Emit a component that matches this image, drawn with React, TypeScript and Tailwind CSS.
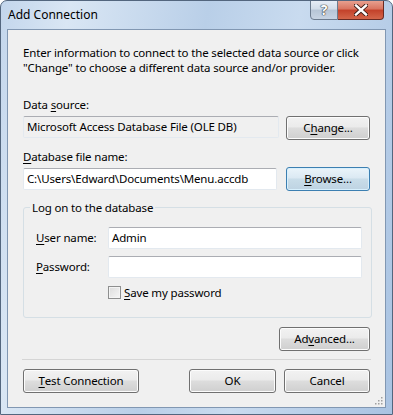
import React from "react";

const btn =
  "h-[24px] rounded-[3px] border border-[#707070] bg-[linear-gradient(#f2f2f2_0%,#ebebeb_45%,#dddddd_50%,#cfcfcf_100%)] shadow-[inset_0_0_0_1px_#fcfcfc] text-[11.5px] text-black flex items-center justify-center";

const field =
  "h-[22px] rounded-[2px] border border-[#e3e9ef] border-t-[#abadb3] flex items-center px-[3px] text-[11.5px]";

function U({ children }: { children: React.ReactNode }) {
  return <span className="underline underline-offset-[2px]">{children}</span>;
}

export default function App() {
  return (
    <div
      className="w-[393px] h-[415px] flex flex-col rounded-t-[7px] border border-[#53667e] bg-[linear-gradient(100deg,#c3d6ec_0%,#d9e6f4_15%,#b9cfe8_45%,#c9dbef_65%,#a9c3e2_100%)] overflow-hidden"
      style={{ fontFamily: '"Noto Sans", "Open Sans", sans-serif' }}
    >
      {/* title bar */}
      <div className="h-[28px] flex items-start justify-between shrink-0">
        <div className="pl-[7px] pt-[6px] text-[12px] leading-[16px] text-black">Add Connection</div>
        <div className="flex mr-[8px] -mt-px">
          <div className="w-[28px] h-[20px] rounded-bl-[4px] border border-[#6b7b8e] bg-[linear-gradient(#e6edf6_0%,#d2dde9_45%,#b6c5d6_50%,#c7d4e3_100%)] flex items-center justify-center">
            <span className="text-[14px] font-bold text-white leading-none [text-shadow:0_0_1px_#333,0_0_1px_#333,0_0_1px_#333]">?</span>
          </div>
          <div className="w-[46px] h-[20px] rounded-br-[4px] border border-l-0 border-[#6a2a22] bg-[linear-gradient(#e7a08f_0%,#d8735f_45%,#c3412a_50%,#d4664a_100%)] flex items-center justify-center">
            <svg width="14" height="12" viewBox="0 0 14 12">
              <path d="M2 1.5 L12 10.5 M12 1.5 L2 10.5" stroke="#3a1a14" strokeWidth="4.2" strokeLinecap="square" />
              <path d="M2 1.5 L12 10.5 M12 1.5 L2 10.5" stroke="#ffffff" strokeWidth="2.4" strokeLinecap="square" />
            </svg>
          </div>
        </div>
      </div>

      {/* client area */}
      <div className="mx-[6px] h-[379px] border border-[#8197b2] bg-[#f0f0f0] flex flex-col px-[15px] text-[11.5px] tracking-[-0.15px] text-black relative">
        <div className="mt-[15px] leading-[15px] whitespace-nowrap">
          Enter information to connect to the selected data source or click
          <br />
          "Change" to choose a different data source and/or provider.
        </div>

        <div className="mt-[22px] leading-[15px]">
          Data <U>s</U>ource:
        </div>
        <div className="mt-[4px] flex gap-[7px] items-start">
          <div className={field + " flex-1 bg-[#f0f0f0] border-[#dadada] border-t-[#abadb3]"}>
            Microsoft Access Database File (OLE DB)
          </div>
          <button className={btn + " w-[84px] h-[23px]"}>
            C<U>h</U>ange...
          </button>
        </div>

        <div className="mt-[9px] leading-[15px]">
          <U>D</U>atabase file name:
        </div>
        <div className="mt-[3px] flex gap-[9px] items-start">
          <div className={field + " flex-1 bg-white mt-px"}>C:\Users\Edward\Documents\Menu.accdb</div>
          <button className="h-[24px] w-[84px] rounded-[3px] border border-[#3c7fb1] bg-[linear-gradient(#eaf4fa_0%,#dbe9f3_45%,#c9dde9_50%,#bed3e2_100%)] shadow-[inset_0_0_0_1px_#d8f0fd] text-[11.5px] flex items-center justify-center">
            <U>B</U>rowse...
          </button>
        </div>

        {/* group box */}
        <div className="mt-[16px] h-[111px] w-[349px] rounded-[3px] border border-[#d5dfe5] relative flex flex-col pl-[12px] pr-[9px]">
          <div className="absolute -top-[8px] left-[6px] px-[2px] bg-[#f0f0f0] leading-[15px]">Log on to the database</div>
          <div className="mt-[19px] flex items-center">
            <div className="w-[72px]">
              <U>U</U>ser name:
            </div>
            <div className={field + " flex-1 bg-white"}>Admin</div>
          </div>
          <div className="mt-[7px] flex items-center">
            <div className="w-[72px]">
              <U>P</U>assword:
            </div>
            <div className={field + " flex-1 bg-white"} />
          </div>
          <div className="mt-[7px] flex items-center pl-[72px] gap-[3px]">
            <div className="w-[13px] h-[13px] border border-[#8e8f8f] bg-[linear-gradient(135deg,#dcdcdc,#f6f6f6)] shadow-[inset_0_0_0_1px_#f4f4f4]" />
            <span className="leading-[15px]">
              <U>S</U>ave my password
            </span>
          </div>
        </div>

        <div className="mt-[9px] flex justify-end">
          <button className={btn + " w-[91px]"}>
            Ad<U>v</U>anced...
          </button>
        </div>

        <div className="mt-[8px] border-t border-[#d5d5d5] -mx-px" />

        <div className="mt-[9px] flex items-center">
          <button className={btn + " w-[116px]"}>
            <U>T</U>est Connection
          </button>
          <div className="flex-1" />
          <button className={btn + " w-[87px]"}>OK</button>
          <button className={btn + " w-[86px] ml-[8px]"}>Cancel</button>
        </div>

        <svg className="absolute right-[1px] bottom-[1px]" width="11" height="11" viewBox="0 0 11 11">
          {[
            [8, 2],
            [5, 5],
            [8, 5],
            [2, 8],
            [5, 8],
            [8, 8],
          ].map(([x, y], i) => (
            <rect key={i} x={x} y={y} width="1.5" height="1.5" fill="#a0a0a0" />
          ))}
        </svg>
      </div>
    </div>
  );
}
